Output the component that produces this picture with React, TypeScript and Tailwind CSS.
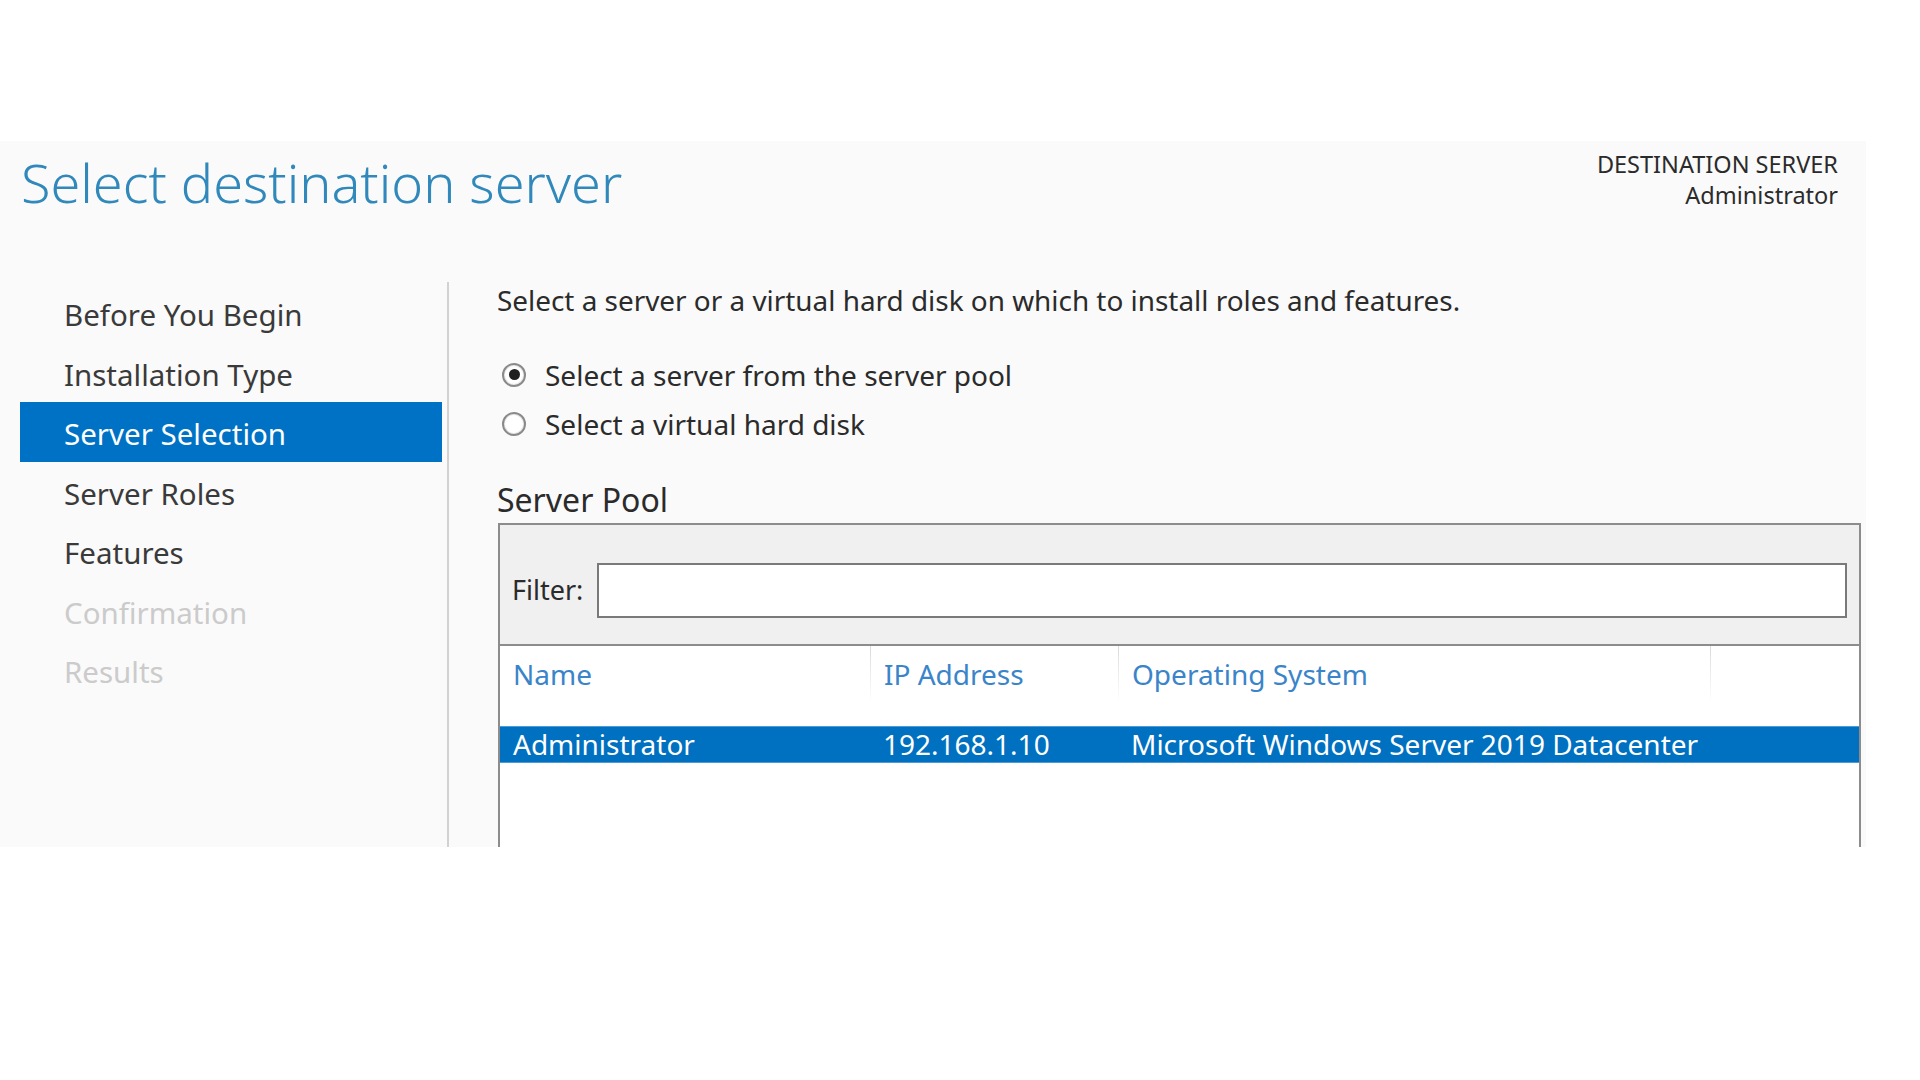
import React from 'react';

// Add Roles and Features wizard – "Server Selection" page

const steps = [
  { label: 'Before You Begin', state: 'done' },
  { label: 'Installation Type', state: 'done' },
  { label: 'Server Selection', state: 'active' },
  { label: 'Server Roles', state: 'done' },
  { label: 'Features', state: 'done' },
  { label: 'Confirmation', state: 'off' },
  { label: 'Results', state: 'off' },
];

function Radio({ checked, label }: { checked?: boolean; label: string }) {
  return (
    <div className="flex h-[49px] items-center gap-[19px]">
      <span className="ml-[5px] flex h-[24px] w-[24px] items-center justify-center rounded-full border-2 border-[#8a8a8a] bg-white shadow-[inset_0_0_0_1px_#e6e6e6]">
        {checked && <span className="h-[11px] w-[11px] rounded-full bg-[#1f1f1f]" />}
      </span>
      <span className="text-[28px] leading-[38px] text-[#2b2b2b]">{label}</span>
    </div>
  );
}

function ColSep() {
  return <div className="absolute left-0 top-0 h-[56px] w-px bg-gradient-to-b from-[#dadada] to-transparent" />;
}

export default function App() {
  return (
    <div className="h-[1080px] w-[1920px] bg-white pt-[141px] font-['Noto_Sans','Open_Sans',sans-serif]">
      <div className="flex h-[706px] w-[1866px] flex-col bg-[#fafafa]">
        {/* header */}
        <div className="flex h-[141px] items-start justify-between">
          <h1 className="ml-[21px] mt-[14px] text-[54px] font-light leading-none text-[#3189bb]">
            Select destination server
          </h1>
          <div className="mr-[28px] mt-[8px] text-right text-[23.5px] leading-[31px] text-[#2b2b2b]">
            <div>DESTINATION SERVER</div>
            <div>Administrator</div>
          </div>
        </div>

        {/* body */}
        <div className="flex flex-1">
          <div className="w-[449px] border-r-2 border-[#d2d2d2] pl-[20px] pr-[5px] pt-[1px]">
            {steps.map((s) => (
              <div
                key={s.label}
                className={
                  s.state === 'active'
                    ? 'h-[59.5px] bg-[#0072c6] pl-[44px] pt-[5px] text-[29.5px] leading-[54px] text-white'
                    : s.state === 'off'
                      ? 'h-[59.5px] pl-[44px] pt-[5px] text-[29.5px] leading-[54px] text-[#cbcbcb]'
                      : 'h-[59.5px] pl-[44px] pt-[5px] text-[29.5px] leading-[54px] text-[#3a3a3a]'
                }
              >
                {s.label}
              </div>
            ))}
          </div>

          <div className="flex flex-1 flex-col pl-[48px]">
            <p className="mt-[2px] text-[27.9px] leading-[32px] text-[#2b2b2b]">
              Select a server or a virtual hard disk on which to install roles and features.
            </p>

            <div className="mt-[34px]">
              <Radio checked label="Select a server from the server pool" />
              <Radio label="Select a virtual hard disk" />
            </div>

            <h2 className="mt-[32px] text-[32px] leading-[40px] text-[#2b2b2b]">Server Pool</h2>

            <div className="ml-[1px] mt-[3px] flex w-[1363px] flex-1 flex-col border-2 border-b-0 border-[#8c8c8c] bg-white">
              <div className="h-[121px] border-b-2 border-[#8c8c8c] bg-[#f0f0f0] pr-[12px] pt-[38px]">
                <div className="flex h-[55px] items-center">
                  <span className="w-[97px] pl-[12px] text-[27px] text-[#2b2b2b]">Filter:</span>
                  <div className="h-[55px] flex-1 border-2 border-[#7a7a7a] bg-white" />
                </div>
              </div>

              <div className="grid h-[80px] grid-cols-[370px_248px_592px_1fr] text-[28px] leading-[38px] text-[#3a84c9]">
                <div className="pl-[13px] pt-[9px]">Name</div>
                <div className="relative pl-[14px] pt-[9px]">
                  <ColSep />
                  IP Address
                </div>
                <div className="relative pl-[14px] pt-[9px]">
                  <ColSep />
                  Operating System
                </div>
                <div className="relative">
                  <ColSep />
                </div>
              </div>

              <div className="grid h-[37px] grid-cols-[370px_248px_592px_1fr] border-y border-[#4d9ad8] bg-[#0070c0] text-[28px] leading-[35px] text-white">
                <div className="pl-[13px]">Administrator</div>
                <div className="pl-[13px]">192.168.1.10</div>
                <div className="pl-[13px]">Microsoft Windows Server 2019 Datacenter</div>
                <div />
              </div>
            </div>
          </div>
        </div>
      </div>
    </div>
  );
}
